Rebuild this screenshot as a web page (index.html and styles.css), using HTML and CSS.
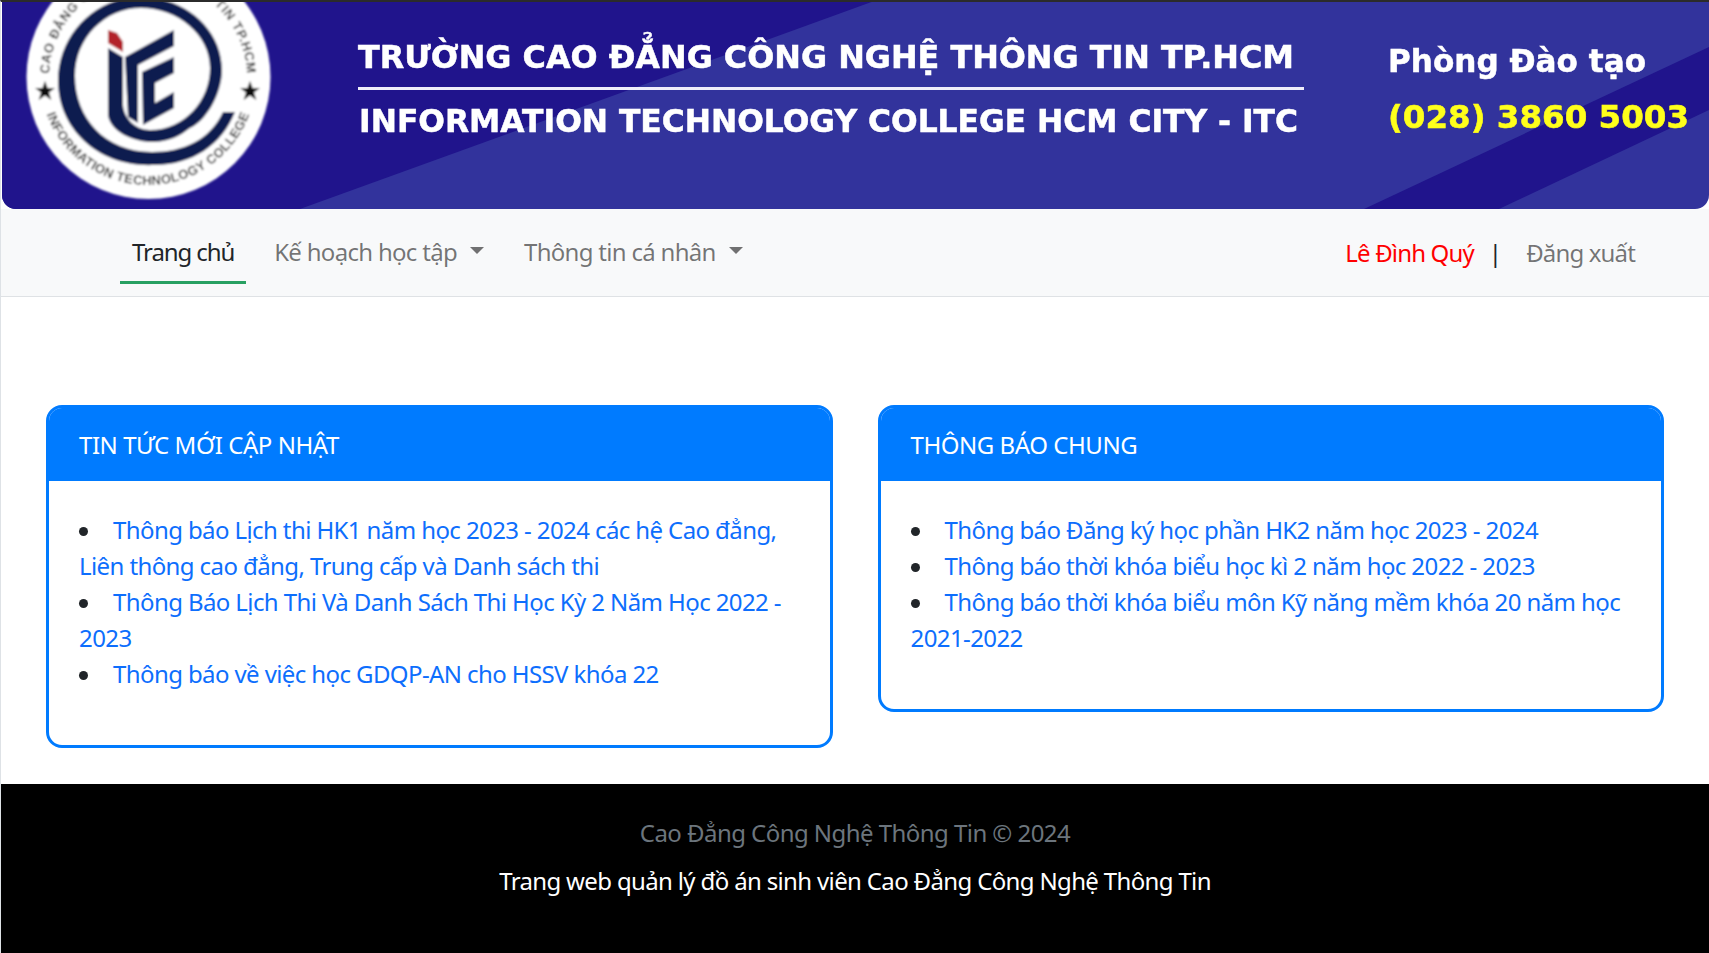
FILE: index.html
```html
<!DOCTYPE html>
<html lang="vi">
<head>
<meta charset="utf-8">
<title>Cao Đẳng Công Nghệ Thông Tin</title>
<link rel="stylesheet" href="styles.css">
</head>
<body>
<header class="banner">
  <svg class="banner-art" viewBox="2 2 1707 207" width="1707" height="207" xmlns="http://www.w3.org/2000/svg">
    <defs>
      <filter id="soft" x="-5%" y="-5%" width="110%" height="110%"><feGaussianBlur stdDeviation="0.8"/></filter>
      <filter id="softer" x="-2%" y="-20%" width="104%" height="140%"><feGaussianBlur stdDeviation="0.5"/></filter>
      <path id="arcTop" d="M50 92 A99 99 0 1 1 246 92"/>
      <path id="arcBottom" d="M40 77 A108 108 0 0 0 256 77"/>
    </defs>
    <rect x="0" y="0" width="1709" height="209" fill="#32339c"/>
    <polygon points="0,0 877,0 300,209 0,209" fill="#20148c"/>
    <polygon points="1364,209 1709,47 1709,110 1499,209" fill="#20148c"/>
    <g filter="url(#soft)">
      <circle cx="148.500" cy="77" r="122" fill="#fff"/>
      <path fill="#101d4f" d="M235 112 C222 145 192 165 155 165 C100 168 58 130 58 81 C58 35 95 -3 140 -3 C186 -3 222 30 222 70 C222 95 205 122 190 128 C180 136 170 141 155 142 C135 143 110 132 108 115 L108 48 L123 57 L123 105 C124 118 135 130 150 130 C185 130 210 100 210 68 C210 35 178 8 141 8 C105 8 75 38 75 76 C75 118 105 152 152 152 C183 152 210 140 223 112 Z"/>
      <polygon fill="#101d4f" points="125,57 174,30 174,46 138,65 138,123 128,117"/>
      <polygon fill="#101d4f" points="142,72 174,57 174,73 155,83 155,103 174,92 174,108 143,125"/>
      <polygon fill="#b3202a" points="108,30 117,33 123,42 123,52 108,43"/>
      <text class="logo-text"><textPath href="#arcTop" startOffset="50%" text-anchor="middle">CAO ĐẲNG CÔNG NGHỆ THÔNG TIN TP.HCM</textPath></text>
      <text class="logo-text logo-text-bottom"><textPath href="#arcBottom" startOffset="50%" text-anchor="middle">INFORMATION TECHNOLOGY COLLEGE</textPath></text>
      <polygon fill="#111" points="45,81 47.600,88 55,88 49,92.500 51.300,100 45,95.500 38.700,100 41,92.500 35,88 42.400,88"/>
      <polygon fill="#111" points="250,81 252.600,88 260,88 254,92.500 256.300,100 250,95.500 243.700,100 246,92.500 240,88 247.400,88"/>
    </g>
    <g filter="url(#softer)">
      <text class="title" x="358" y="68" textLength="936" lengthAdjust="spacingAndGlyphs">TRƯỜNG CAO ĐẲNG CÔNG NGHỆ THÔNG TIN TP.HCM</text>
      <text class="title" x="359" y="132" textLength="939" lengthAdjust="spacingAndGlyphs">INFORMATION TECHNOLOGY COLLEGE HCM CITY - ITC</text>
      <text class="title" x="1388" y="72" textLength="258" lengthAdjust="spacingAndGlyphs">Phòng Đào tạo</text>
      <text class="title phone" x="1388" y="128" textLength="301" lengthAdjust="spacingAndGlyphs">(028) 3860 5003</text>
    </g>
    <rect x="358" y="87" width="946" height="3" fill="#efeefa"/>
  </svg>
</header>

<nav class="navbar">
  <ul class="nav-links">
    <li><a class="nav-link active" href="#">Trang chủ</a></li>
    <li><a class="nav-link dropdown" href="#">Kế hoạch học tập</a></li>
    <li><a class="nav-link dropdown" href="#">Thông tin cá nhân</a></li>
  </ul>
  <div class="nav-user">
    <span class="user-name">Lê Đình Quý</span>
    <span class="user-sep">|</span>
    <a class="nav-link logout" href="#">Đăng xuất</a>
  </div>
</nav>

<main class="content">
  <section class="card">
    <h2 class="card-header">TIN TỨC MỚI CẬP NHẬT</h2>
    <ul class="card-list">
      <li><a href="#">Thông báo Lịch thi HK1 năm học 2023 - 2024 các hệ Cao đẳng, Liên thông cao đẳng, Trung cấp và Danh sách thi</a></li>
      <li><a href="#">Thông Báo Lịch Thi Và Danh Sách Thi Học Kỳ 2 Năm Học 2022 - 2023</a></li>
      <li><a href="#">Thông báo về việc học GDQP-AN cho HSSV khóa 22</a></li>
    </ul>
  </section>
  <section class="card">
    <h2 class="card-header">THÔNG BÁO CHUNG</h2>
    <ul class="card-list">
      <li><a href="#">Thông báo Đăng ký học phần HK2 năm học 2023 - 2024</a></li>
      <li><a href="#">Thông báo thời khóa biểu học kì 2 năm học 2022 - 2023</a></li>
      <li><a href="#">Thông báo thời khóa biểu môn Kỹ năng mềm khóa 20 năm học 2021-2022</a></li>
    </ul>
  </section>
</main>

<footer class="footer">
  <p class="copyright">Cao Đẳng Công Nghệ Thông Tin © 2024</p>
  <p class="footer-note">Trang web quản lý đồ án sinh viên Cao Đẳng Công Nghệ Thông Tin</p>
</footer>
</body>
</html>
```
FILE: styles.css
```css
* { box-sizing: border-box; }

html, body { height: 100%; }

body {
  margin: 0;
  background: #fff;
  border-top: 2px solid #2b2b2b;
  border-left: 1px solid #dee2e6;
  font-family: "Noto Sans", "Open Sans", sans-serif;
  font-size: 24px;
  line-height: 36px;
  letter-spacing: -0.55px;
  color: #212529;
  overflow: hidden;
}

a { text-decoration: none; }

.banner {
  margin-left: 1px;
  height: 207px;
  border-radius: 0 0 14px 14px;
  overflow: hidden;
}

.banner-art { display: block; }

.logo-text {
  font-family: "Liberation Sans", sans-serif;
  font-weight: 700;
  font-size: 13px;
  letter-spacing: 0.6px;
  fill: #3c3c3c;
}

.logo-text-bottom { letter-spacing: 0.35px; }

.title {
  font-family: "DejaVu Sans", sans-serif;
  font-weight: 700;
  font-size: 32px;
  letter-spacing: 0;
  fill: #fff;
  stroke: #fff;
  stroke-width: 0.5px;
}

.phone {
  fill: #ffff1a;
  stroke: #ffff1a;
}

.navbar {
  height: 88px;
  display: flex;
  justify-content: space-between;
  align-items: flex-start;
  padding: 18px 74px 0 119px;
  background: #f8f9fa;
  border-bottom: 1px solid #dfe2e5;
}

.nav-links {
  display: flex;
  gap: 16px;
  list-style: none;
  margin: 0;
  padding: 0;
}

.nav-link {
  display: block;
  padding: 7px 12px 11px;
  color: rgba(0, 0, 0, 0.55);
}

.nav-link.active {
  color: #212529;
  letter-spacing: -1.1px;
  border-bottom: 3px solid #28a062;
}

.dropdown {
  padding-right: 0;
  margin-right: 12px;
  letter-spacing: -0.7px;
}

.dropdown::after {
  content: "";
  display: inline-block;
  margin-left: 13px;
  vertical-align: 7px;
  border-top: 7px solid rgba(0, 0, 0, 0.55);
  border-left: 7px solid transparent;
  border-right: 7px solid transparent;
}

.nav-user {
  display: flex;
  align-items: flex-start;
  padding-top: 8px;
  letter-spacing: -0.85px;
}

.user-name { color: #f00; }

.user-sep { margin: 0 25px 0 15px; }

.logout { padding: 0; }

.content {
  display: grid;
  grid-template-columns: 1fr 1fr;
  gap: 45px;
  align-items: start;
  padding: 108px 45px 36px;
}

.card {
  border: 3px solid #007bff;
  border-radius: 16px;
  overflow: hidden;
  background: #fff;
}

.card-header {
  margin: 0;
  padding: 19px 30px 18px;
  height: 73px;
  background: #007bff;
  color: #fff;
  font-size: 24px;
  font-weight: 400;
  line-height: 36px;
  letter-spacing: -0.45px;
}

.card-list {
  list-style: none;
  margin: 0;
  padding: 31px 30px 53px;
  letter-spacing: -0.6px;
}

.card-list li::before {
  content: "";
  display: inline-block;
  width: 9px;
  height: 9px;
  margin-right: 25px;
  vertical-align: 3px;
  border-radius: 50%;
  background: #212529;
}

.card-list a { color: #0d6efd; }

.footer {
  height: 169px;
  padding-top: 31px;
  background: #000;
  text-align: center;
}

.footer p { margin: 0; }

.footer .copyright {
  color: #6c757d;
  margin-bottom: 12px;
}

.footer-note {
  color: #fff;
  letter-spacing: -0.65px;
}
```
